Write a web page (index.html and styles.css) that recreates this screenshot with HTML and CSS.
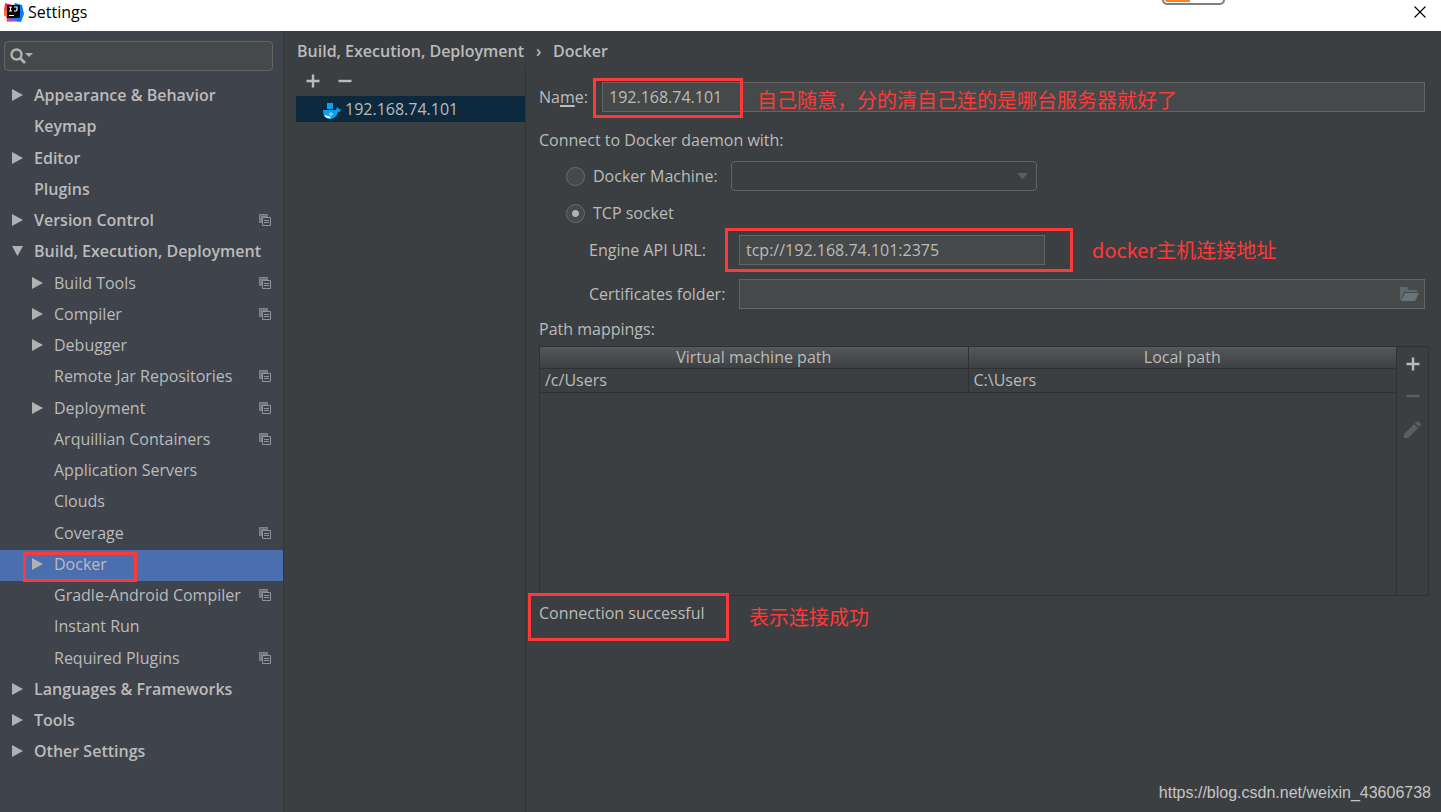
FILE: index.html
```html
<!DOCTYPE html>
<html lang="en">
<head>
<meta charset="utf-8">
<title>Settings</title>
<link rel="stylesheet" href="styles.css">
</head>
<body>
<svg class="defs" aria-hidden="true">
  <symbol id="copy" viewBox="0 0 12 12"><path d="M.5.5h8v2h-6v6h-2z" fill="#66717c" stroke="#7b8691"/><path d="M3.5 3.5h8v8h-8z" fill="#3f434c" stroke="#8a959f"/><path d="M5 6.500h5M5 8.500h5" stroke="#8a959f"/></symbol>
  <symbol id="right" viewBox="0 0 11 12"><path d="M0 0l11 6-11 6z" fill="#afb1b3"/></symbol>
  <symbol id="down" viewBox="0 0 12 11"><path d="M0 0h12l-6 11z" fill="#afb1b3"/></symbol>
  <symbol id="plus" viewBox="0 0 14 14"><path d="M7 .500v13M.500 7h13" stroke="currentColor" stroke-width="2.400" fill="none"/></symbol>
  <symbol id="minus" viewBox="0 0 14 14"><path d="M.500 7h13" stroke="currentColor" stroke-width="2.400" fill="none"/></symbol>
</svg>

<header class="titlebar">
  <svg class="logo" viewBox="0 0 20 20"><path d="M1 1l8 2 1 13-7 4-1-8-2-3z" fill="#fe315d"/><path d="M0 8l5 2-1 5-4-1z" fill="#f97a12"/><path d="M11 1l7 2 2 9-3 8-8-1-5-4z" fill="#087cfa"/><path d="M9 16l4 3-9 1z" fill="#a349c9"/><path d="M3 3h13v13H3z"/><path d="M5 5h3M6.500 5v4M5 9h3M10 5h3v3l-1 1h-2" stroke="#fff" stroke-width="1.200" fill="none"/><path d="M5 13.500h5" stroke="#fff"/></svg>
  <h1 class="title">Settings</h1>
  <span class="battery"></span>
  <button class="close" aria-label="Close"><svg viewBox="0 0 12 12"><path d="M.5.500l11 11M11.500.500l-11 11" stroke="#000" stroke-width="1.100"/></svg></button>
</header>

<div class="window">
  <nav class="sidebar">
    <div class="search">
      <svg class="search-icon" viewBox="0 0 23 16"><circle cx="6.500" cy="6.500" r="5" fill="none" stroke="#afb1b3" stroke-width="2.400"/><path d="M10 10l5 5" stroke="#afb1b3" stroke-width="2.800"/><path d="M15 5h8l-4 4z" fill="#afb1b3"/></svg>
      <input class="search-input" type="text" aria-label="Search settings">
    </div>
    <ul class="tree">
      <li class="row top"><svg class="arrow"><use href="#right"/></svg><span class="text">Appearance &amp; Behavior</span></li>
      <li class="row top"><span class="arrow"></span><span class="text">Keymap</span></li>
      <li class="row top"><svg class="arrow"><use href="#right"/></svg><span class="text">Editor</span></li>
      <li class="row top"><span class="arrow"></span><span class="text">Plugins</span></li>
      <li class="row top"><svg class="arrow"><use href="#right"/></svg><span class="text">Version Control</span><svg class="copy"><use href="#copy"/></svg></li>
      <li class="row top"><svg class="arrow"><use href="#down"/></svg><span class="text">Build, Execution, Deployment</span></li>
      <li class="row sub"><svg class="arrow"><use href="#right"/></svg><span class="text">Build Tools</span><svg class="copy"><use href="#copy"/></svg></li>
      <li class="row sub"><svg class="arrow"><use href="#right"/></svg><span class="text">Compiler</span><svg class="copy"><use href="#copy"/></svg></li>
      <li class="row sub"><svg class="arrow"><use href="#right"/></svg><span class="text">Debugger</span></li>
      <li class="row sub"><span class="arrow"></span><span class="text">Remote Jar Repositories</span><svg class="copy"><use href="#copy"/></svg></li>
      <li class="row sub"><svg class="arrow"><use href="#right"/></svg><span class="text">Deployment</span><svg class="copy"><use href="#copy"/></svg></li>
      <li class="row sub"><span class="arrow"></span><span class="text">Arquillian Containers</span><svg class="copy"><use href="#copy"/></svg></li>
      <li class="row sub"><span class="arrow"></span><span class="text">Application Servers</span></li>
      <li class="row sub"><span class="arrow"></span><span class="text">Clouds</span></li>
      <li class="row sub"><span class="arrow"></span><span class="text">Coverage</span><svg class="copy"><use href="#copy"/></svg></li>
      <li class="row sub selected"><svg class="arrow"><use href="#right"/></svg><span class="text">Docker</span><span class="mark mark-tree"></span></li>
      <li class="row sub"><span class="arrow"></span><span class="text">Gradle-Android Compiler</span><svg class="copy"><use href="#copy"/></svg></li>
      <li class="row sub"><span class="arrow"></span><span class="text">Instant Run</span></li>
      <li class="row sub"><span class="arrow"></span><span class="text">Required Plugins</span><svg class="copy"><use href="#copy"/></svg></li>
      <li class="row top"><svg class="arrow"><use href="#right"/></svg><span class="text">Languages &amp; Frameworks</span></li>
      <li class="row top"><svg class="arrow"><use href="#right"/></svg><span class="text">Tools</span></li>
      <li class="row top"><svg class="arrow"><use href="#right"/></svg><span class="text">Other Settings</span></li>
    </ul>
  </nav>

  <main class="main">
    <h2 class="crumbs"><span>Build, Execution, Deployment</span><span class="sep">›</span><span>Docker</span></h2>
    <div class="panes">
      <section class="servers">
        <div class="tools">
          <button class="tool" aria-label="Add"><svg><use href="#plus"/></svg></button>
          <button class="tool" aria-label="Remove"><svg><use href="#minus"/></svg></button>
        </div>
        <div class="server">
          <svg class="whale" viewBox="0 0 18 16"><path d="M4 0h6v6H4z" fill="#0aa0f0"/><path d="M0 7h13l1-3 2 2 2 .500-1 2-2 .500c-1 4-4 7-8 7-4 0-7-3-7-9z" fill="#0aa0f0"/><path d="M1 12c3 1 6 .500 7 3-3 1-6-.500-7-3z" fill="#fff"/><circle cx="8" cy="11" r="1.600" fill="#fff"/><circle cx="8" cy="11" r=".7" fill="#0d293e"/></svg>
          <span>192.168.74.101</span>
        </div>
      </section>

      <form class="details">
        <div class="line">
          <label class="name-label" for="name">Na<u>m</u>e:</label>
          <input class="field grow" id="name" type="text" value="192.168.74.101">
          <span class="mark mark-name"></span>
          <span class="note note-name">自己随意，分的清自己连的是哪台服务器就好了</span>
        </div>
        <p class="caption daemon">Connect to Docker daemon with:</p>
        <div class="line option">
          <input class="radio" id="machine" type="radio" name="mode">
          <label class="machine-label" for="machine">Docker Machine:</label>
          <select class="combo" aria-label="Docker Machine" disabled></select>
        </div>
        <div class="line option socket">
          <input class="radio" id="tcp" type="radio" name="mode" checked>
          <label for="tcp">TCP socket</label>
        </div>
        <div class="line nested">
          <label class="nested-label" for="url">Engine API URL:</label>
          <input class="field url" id="url" type="text" value="tcp://192.168.74.101:2375">
          <span class="mark mark-url"></span>
          <span class="note note-url">docker主机连接地址</span>
        </div>
        <div class="line nested certs">
          <label class="nested-label" for="certs">Certificates folder:</label>
          <div class="field browse grow">
            <input class="browse-input" id="certs" type="text">
            <button class="folder" type="button" aria-label="Browse"><svg viewBox="0 0 20 15"><path d="M0 0h7l2 3h8v2H4L1 13H0z" fill="#5f686e"/><path d="M5 6h14l-4 8H1z" fill="#68737a"/></svg></button>
          </div>
        </div>
        <p class="caption paths">Path mappings:</p>
        <div class="mappings">
          <div class="grid">
            <table class="table">
              <thead><tr><th>Virtual machine path</th><th>Local path</th></tr></thead>
              <tbody><tr><td>/c/Users</td><td>C:\Users</td></tr></tbody>
            </table>
          </div>
          <div class="side">
            <button class="tool" type="button" aria-label="Add mapping"><svg><use href="#plus"/></svg></button>
            <button class="tool off" type="button" aria-label="Remove mapping"><svg><use href="#minus"/></svg></button>
            <button class="tool off" type="button" aria-label="Edit mapping"><svg class="pencil" viewBox="0 0 17 17"><path d="M0 17v-4L10 3l4 4L4 17zM11 2l1-1q1.500-1.500 3 0l1 1q1.500 1.500 0 3l-1 1z" fill="currentColor"/></svg></button>
          </div>
        </div>
        <div class="line status">
          <output>Connection successful</output>
          <span class="mark mark-status"></span>
          <span class="note note-status">表示连接成功</span>
        </div>
      </form>
    </div>
  </main>
</div>
<span class="watermark">https://blog.csdn.net/weixin_43606738</span>
</body>
</html>
```
FILE: styles.css
```css
* { box-sizing: border-box; }
body {
  margin: 0;
  min-height: 100vh;
  display: flex;
  flex-direction: column;
  position: relative;
  background: #3c3f41;
  color: #bbb;
  font: 16px/20px "Open Sans", "Noto Sans CJK SC", sans-serif;
}
input, select, button { font: inherit; color: inherit; }
button { display: flex; align-items: center; justify-content: center; padding: 0; border: 0; background: none; }
h1, h2, p, ul { margin: 0; padding: 0; font-size: inherit; }
.defs { display: none; }

.titlebar { position: relative; display: flex; align-items: center; height: 31px; padding: 0 15px 7px 4px; background: #fff; color: #000; }
.logo { width: 20px; height: 20px; }
.title { flex: 1; margin-left: 4px; font-weight: 400; }
.close svg { width: 12px; height: 12px; }
.battery { position: absolute; top: -10px; right: 216px; width: 63px; height: 15px; border: 2px solid #7f7f7f; border-radius: 5px; background: linear-gradient(90deg, #ff7f27 26px, #fff 26px); background-clip: content-box; padding: 1px; }

.window { flex: 1; display: flex; }
.sidebar { width: 284px; padding-top: 10px; border-right: 1px solid #333638; background: #3f434c; }
.search { display: flex; align-items: center; height: 30px; margin: 0 10px 10px 4px; padding: 0 5px; border: 1px solid #646464; border-radius: 4px; background: #45494a; }
.search-icon { width: 23px; height: 16px; }
.search-input { flex: 1; min-width: 0; border: 0; background: none; outline: 0; }
.tree { list-style: none; }
.row { position: relative; display: flex; align-items: center; height: 31px; padding: 0 12px 3px 12px; }
.row:nth-child(4n + 3) { height: 32px; }
.row.sub { padding-left: 32px; }
.row.top { font-weight: 600; }
.row.selected { background: #4b6eaf; }
.arrow { width: 11px; height: 12px; margin-right: 11px; }
.text { flex: 1; white-space: nowrap; }
.copy { width: 12px; height: 12px; }

.main { flex: 1; min-width: 0; display: flex; flex-direction: column; padding-left: 12px; }
.crumbs { display: flex; height: 35px; padding: 10px 0 0 1px; font-weight: 600; }
.crumbs .sep { width: 29px; text-align: center; }
.panes { flex: 1; display: flex; }
.servers { width: 230px; border-right: 1px solid #323232; }
.tools { display: flex; align-items: center; gap: 18px; height: 30px; padding-left: 10px; }
.tool svg { display: block; width: 14px; height: 14px; }
.tool.off { color: #5c5e60; }
.server { display: flex; align-items: center; gap: 4px; height: 26px; padding-left: 27px; background: #0d293e; }
.whale { width: 18px; height: 16px; margin-top: 3px; }

.details { flex: 1; min-width: 0; padding: 16px 12px 0 13px; }
.line { position: relative; display: flex; align-items: center; padding-right: 4px; }
.name-label { width: 63px; }
.name-label u { text-decoration-thickness: 2px; text-underline-offset: 2px; }
.field { height: 30px; padding: 0 6px; border: 1px solid #646464; background: #45494a; border-radius: 0; outline: 0; }
.grow { flex: 1; min-width: 0; }
.daemon { margin: 18px 0 11px; }
.option { padding-left: 27px; }
.radio { appearance: none; width: 19px; height: 19px; margin: 0 8px 0 0; border: 1px solid #6b6b6b; border-radius: 50%; background: #45494a; }
.radio:checked { background: radial-gradient(circle, #afb1b3 3px, #45494a 4px); }
.machine-label { width: 138px; }
.combo { appearance: none; width: 306px; height: 30px; border: 1px solid #646464; border-radius: 4px; opacity: 1; background: #3c3f41; }
.option:has(.combo)::after { content: ""; width: 11px; height: 7px; margin-left: -20px; background: #5c5e60; clip-path: polygon(0 0, 100% 0, 50% 100%); }
.socket { margin: 12px 0; }
.nested { padding-left: 50px; }
.nested-label { width: 150px; }
.url { width: 306px; }
.certs { margin: 14px 0 10px; }
.browse { display: flex; align-items: center; padding-right: 4px; }
.browse-input { flex: 1; min-width: 0; border: 0; background: none; outline: 0; }
.folder svg { width: 20px; height: 15px; }

.mappings { display: flex; min-height: 250px; margin: 7px 0; }
.grid { flex: 1; border: 1px solid #323232; }
.table { width: 100%; table-layout: fixed; border-collapse: collapse; }
.table th { height: 21px; padding: 1px 0 0; line-height: 19px; background: linear-gradient(#55585a, #3d4042); font-weight: 400; border-bottom: 1px solid #2f3132; }
.table td { height: 24px; padding: 0 5px; border-bottom: 1px solid #2f3132; }
.table th + th, .table td + td { border-left: 1px solid #2f3132; }
.side { display: flex; flex-direction: column; align-items: center; gap: 18px; width: 32px; padding-top: 10px; border: 1px solid #323232; border-left: 0; }
.tool .pencil { width: 17px; height: 17px; }

.mark { position: absolute; border: 3px solid #ff3838; }
.mark-tree { left: 23px; top: 2px; width: 114px; height: 30px; z-index: 1; }
.mark-name { left: 54px; top: -4px; width: 150px; height: 40px; }
.mark-url { left: 186px; top: -7px; width: 348px; height: 44px; }
.mark-status { left: -11px; top: -10px; width: 201px; height: 48px; }
.note { position: absolute; color: #ff3838; font: 20px/24px "Noto Sans CJK SC", sans-serif; white-space: nowrap; }
.note-name { left: 218px; top: 6px; }
.note-url { left: 553px; top: 3px; }
.note-status { left: 210px; top: 2px; }
.watermark { position: absolute; right: 10px; bottom: 9px; font: 16px/20px "Liberation Sans", sans-serif; color: #c4c5c6; }
```
